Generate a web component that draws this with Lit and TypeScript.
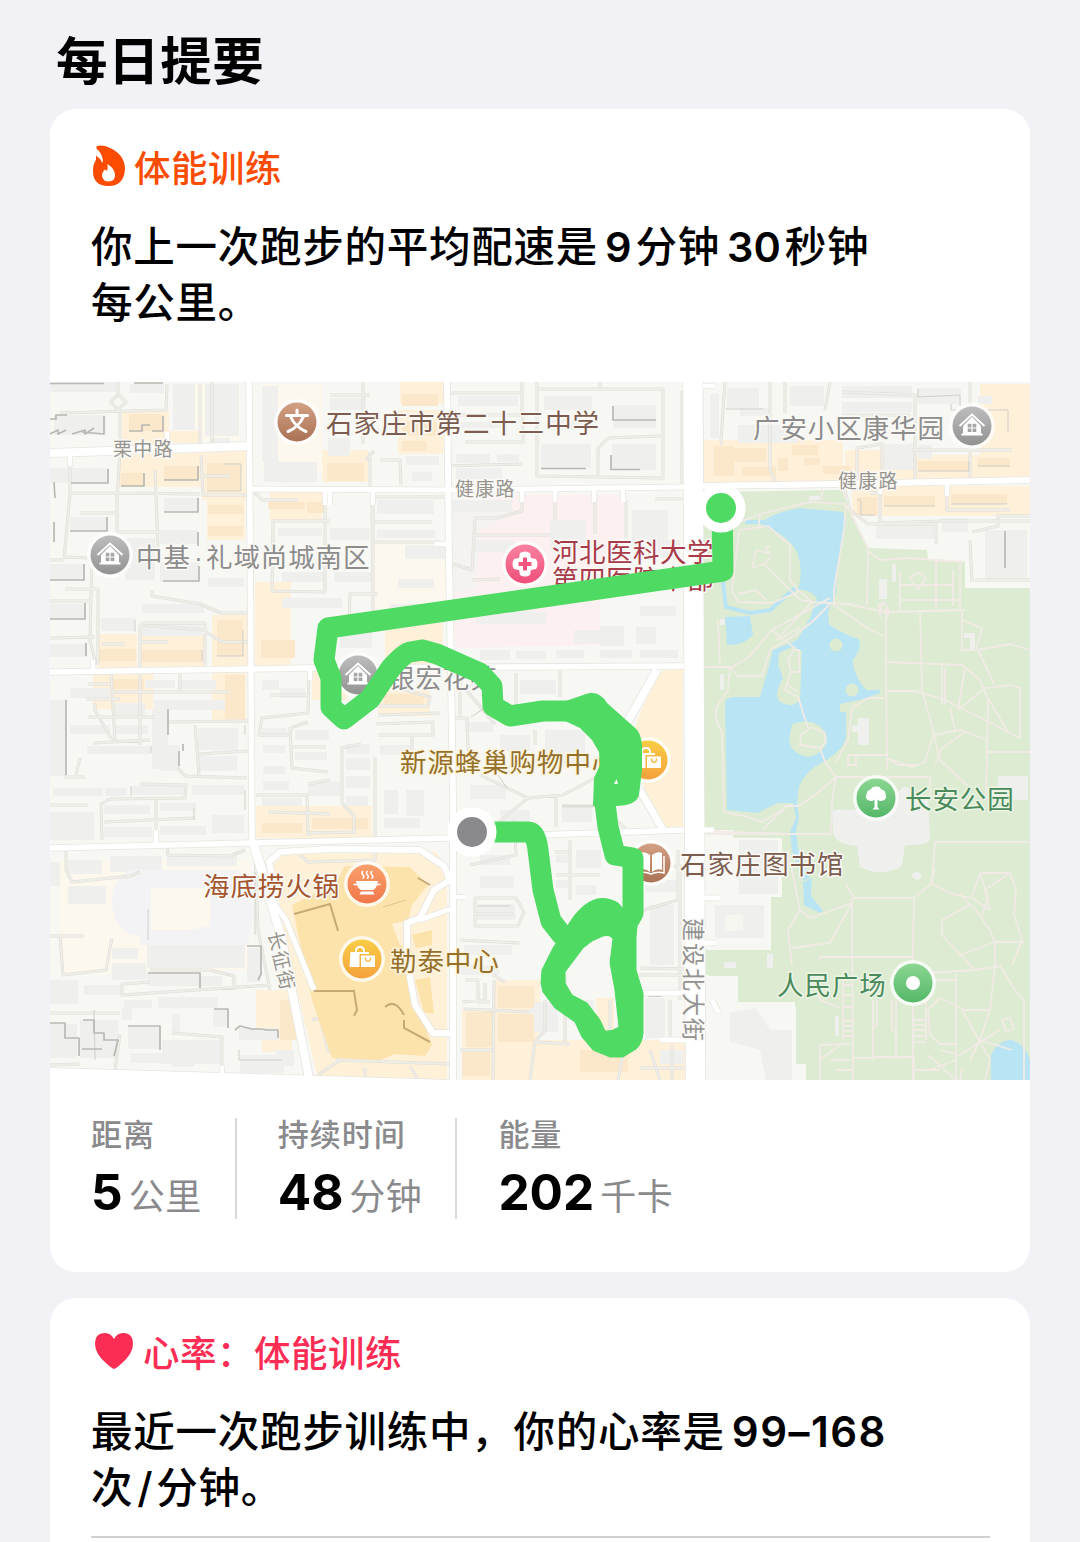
import { LitElement, css, html, svg } from "lit";
import { customElement, property } from "lit/decorators.js";

type Rect = [number, number, number, number];

// main streets: path, width
const STREETS: [string, number][] = [
  ["M50 453L140 450L250 446", 8],
  ["M249 382L251 670L252 845", 5.5],
  ["M250 489L450 490L684 487", 5],
  ["M702 486L840 484L1030 480", 6],
  ["M447 382L449 560L451 670L453 800V1080", 6],
  ["M50 672L250 669L310 668M300 668L684 666", 5.5],
  ["M50 848L250 843L450 838L684 830", 5.5],
  ["M253 843L282 940L309 1078", 8],
  ["M256 845L275 905L286 920L314 990", 5],
  ["M657 670L640 700L620 735", 8],
  ["M640 790L663 830", 7],
  ["M273 880L269 862L280 852L330 849L420 850L444 866L450 880L434 890L420 918L407 923V960L415 1005L433 1033H452", 6],
  ["M420 920L450 909", 5],
  ["M50 1071L222 1076L450 1083", 6],
  ["M222 1074V1066M325 492V505M330 492V505M373 492V505M522 490V502M555 490V502M594 490V502M623 490V502", 4.5],
  ["M167 446V432M70 455V466M310 668V680M93 671V660M156 846V830M435 544H448M450 897H466M880 483V494M947 483V496M703 386H714", 4.5],
  ["M660 1040H690M640 993H686", 5],
  ["M704 898H720M704 943H716M712 1000L718 1012M704 830H714", 5],
];

// small lanes between the buildings
const LANES = [
  "M118 382V394L126 402L118 410L111 402L118 394M60 413L166 410L167 384M120 411V448M120 450L117 500V532H160",
  "M70 465V493L64 558M64 560H50M80 513H115M70 493H117L200 494M155 470L158 548M201 455L203 495H246M201 476H230",
  "M200 384V445M212 382V444M64 557L92 558L90 640L96 665M65 589H98M98 588V665M140 745V625L203 630L222 642H248",
  "M50 601H90M152 590V596L200 604L221 613H247M325 505V592L272 591L273 521H330M273 521V570M372 505L373 590M349 623L350 594H378",
  "M254 492L262 500H298M363 382V444M370 452V488M330 395H370M366 460L374 451M380 460H400L401 485",
  "M372 522H432M375 542H440M372 497H444M373 500V620M450 393H522M449 415H522V382M465 442H523V413M447 466L523 464",
  "M538 389H663V478L537 476V382M598 475V448L608 438L661 436M682 391V490M600 382V391",
  "M522 502V511L497 518H475L472 570L453 564M472 535H550M555 502V520M595 502V534M626 500V538M655 499H684M472 580L500 579",
  "M50 638L95 637M102 644H125M140 642H168M140 623H205V665M95 703V710L112 740H110M88 684H110M86 699H120M88 717H155M93 743L150 740",
  "M111 673L115 740M180 672V690M112 692H230M168 722L248 721M195 725L199 775M178 768L185 776L247 778M199 754L248 751",
  "M140 784L186 785L185 798L110 799L101 804L102 840M156 799V830M104 822L195 818M50 805H88M76 775L80 758M64 777H85",
  "M309 670L308 713L262 718L259 735H288L293 727L308 722M290 727L292 768L328 772M292 747H326M270 695H308",
  "M256 795H307L308 836M268 812L330 814M308 784L330 780M341 748L361 744M342 747V803L354 816V834M308 833L354 832M375 757V840",
  "M378 715L440 713M378 735H433V722L376 724M412 734V750M460 674V717M467 717L468 748L475 765M405 690L430 697L428 706H377",
  "M448 718H465M466 690L495 724M516 673V705M560 670V697M535 730V745M480 775L528 798L563 795L597 777M556 796V827M528 798L480 838M562 806H600M606 810L625 828",
  "M470 865L516 855L514 820M570 840V878M570 900V848M475 898H516L524 912L518 926H475ZM475 914H514M460 940L520 943",
  "M640 868L680 866V1000M637 912L678 900V850M640 968L684 969M630 975H684M570 845V900M555 852H570M556 875H600",
  "M462 1002L485 1000V983M465 980H478V1002H490M493 975L505 982M494 980L493 1080M463 1009L530 1012M545 1000V1030L535 1042L530 1080M535 1042L570 1044",
  "M565 975V1043M610 1000V1030M670 1000V1040M625 1044L618 1080M640 1068H686M672 1045V1080M660 1080L650 1050M460 1050H492",
  "M66 848V870L72 882L130 876L140 872M167 847L168 855L230 856L245 850M60 935L63 975L106 970L112 938M50 936H84",
  "M255 850L258 930L270 990M270 985L122 995V984L150 982M150 970L210 970L234 976V990M50 1013H120M120 1034L115 1070M172 1033L222 1037V1070",
  "M50 1065L80 1064M312 1020L320 1018L328 1050L340 1060L318 1075M340 1060L450 1064M365 1068V1080M410 1066L418 1080M300 855L308 862L375 860V848",
  "M725 382L721 440L722 445M770 382V470L776 482M785 382V413M830 382L825 410M842 392L915 395V480M842 415H910M970 382V480M857 480V448L882 444V470M912 450L1012 450",
  "M843 483L850 510L868 524H936V544M870 493H880V523L942 521H1030M947 496V510H1010M972 532L998 526V516H1030M975 580H1030M970 540L972 582",
  "M706 899H765V938L760 943H706M712 1000V1010L723 1040L762 1053V1080M723 1042L710 1055V1080M750 1050L745 1065",
];

// tinted blocks under the buildings
const SHOPS: Rect[] = [
  [122, 411, 47, 36], [119, 452, 84, 35], [202, 450, 44, 50], [207, 500, 38, 40], [270, 492, 52, 28], [322, 450, 46, 32],
  [97, 634, 40, 34], [140, 635, 64, 32], [212, 615, 36, 52], [255, 582, 36, 85], [93, 674, 60, 35], [212, 673, 34, 48],
  [312, 670, 35, 30], [256, 806, 116, 32], [400, 382, 44, 22], [398, 410, 46, 44], [703, 440, 140, 44], [845, 450, 66, 34],
  [910, 455, 120, 28], [980, 384, 50, 96], [852, 486, 178, 30], [256, 990, 40, 40], [262, 1030, 30, 22], [462, 1009, 76, 71],
  [495, 980, 45, 40], [538, 1040, 148, 40], [385, 620, 58, 44], [378, 690, 52, 26], [596, 998, 18, 40], [170, 431, 30, 12],
];

const SHOP_BUILDINGS: Rect[] = [
  [129, 414, 34, 17], [121, 473, 23, 13], [164, 466, 34, 14], [207, 463, 34, 28], [208, 505, 35, 9], [208, 526, 35, 10],
  [268, 502, 37, 7], [307, 502, 18, 11], [327, 463, 37, 18], [98, 649, 38, 12], [142, 650, 60, 12], [217, 620, 26, 36],
  [261, 640, 34, 18], [110, 679, 34, 10], [225, 675, 20, 44], [262, 823, 40, 10], [312, 818, 56, 11], [402, 394, 36, 12],
  [402, 422, 35, 14], [402, 441, 25, 10], [714, 446, 20, 30], [742, 467, 34, 9], [778, 458, 10, 13], [792, 445, 26, 10],
  [804, 458, 16, 7], [823, 466, 28, 8], [728, 448, 38, 14], [918, 461, 51, 10], [978, 458, 32, 9], [884, 496, 51, 10],
  [951, 494, 56, 10], [857, 497, 20, 18], [498, 986, 36, 22], [466, 1012, 26, 35], [498, 1014, 36, 28], [462, 1052, 28, 24],
  [580, 1050, 48, 22], [280, 1000, 18, 40], [384, 694, 40, 10],
];

const BUILDINGS: Rect[] = [
  [50, 382, 66, 10], [54, 415, 52, 20], [50, 468, 59, 15], [70, 517, 37, 14], [50, 564, 34, 16], [50, 604, 34, 15], [50, 644, 37, 13],
  [130, 384, 34, 9], [173, 384, 22, 46], [205, 384, 34, 52], [210, 438, 20, 6], [164, 498, 34, 14], [160, 530, 38, 14], [160, 562, 39, 20],
  [125, 538, 30, 42], [208, 578, 36, 9], [142, 604, 62, 9], [101, 618, 34, 13], [142, 624, 60, 12], [262, 386, 16, 76], [264, 462, 53, 20],
  [330, 398, 36, 12], [328, 438, 22, 18], [278, 528, 44, 8], [330, 528, 40, 12], [282, 572, 44, 10], [334, 572, 38, 10], [282, 598, 60, 10],
  [340, 628, 32, 20], [70, 688, 40, 10], [145, 680, 30, 8], [178, 680, 38, 9], [154, 700, 74, 10], [50, 700, 15, 76], [70, 725, 40, 9],
  [115, 725, 33, 9], [152, 709, 16, 60], [115, 703, 30, 12], [87, 746, 64, 8], [198, 728, 40, 22], [199, 756, 38, 15], [160, 745, 20, 26],
  [53, 788, 50, 8], [105, 788, 22, 8], [131, 786, 54, 9], [192, 785, 52, 10], [104, 805, 46, 9], [160, 803, 36, 8], [104, 827, 48, 10],
  [160, 826, 46, 9], [212, 815, 32, 18], [50, 812, 44, 28], [262, 680, 17, 10], [280, 688, 25, 10], [262, 728, 25, 9], [295, 730, 34, 10],
  [263, 745, 22, 8], [295, 752, 32, 8], [263, 766, 22, 8], [263, 781, 26, 9], [308, 782, 32, 14], [262, 798, 40, 8], [346, 744, 24, 10],
  [346, 758, 24, 12], [346, 776, 24, 12], [346, 796, 22, 10], [380, 745, 30, 10], [384, 790, 14, 24], [406, 790, 18, 26], [384, 818, 36, 10],
  [458, 396, 60, 10], [456, 422, 52, 6], [456, 454, 34, 9], [497, 454, 22, 8], [456, 468, 46, 11], [406, 456, 33, 9], [412, 472, 20, 9],
  [544, 396, 48, 14], [613, 405, 43, 23], [541, 444, 50, 24], [612, 444, 44, 26], [546, 420, 46, 10], [377, 500, 57, 14], [377, 530, 58, 8],
  [405, 545, 40, 14], [398, 579, 36, 9], [390, 604, 40, 10], [452, 500, 60, 12], [475, 540, 40, 12], [550, 520, 36, 30], [632, 510, 36, 30],
  [650, 540, 30, 18], [600, 626, 24, 20], [640, 606, 36, 10], [636, 627, 20, 17], [574, 630, 30, 14], [476, 612, 70, 12], [480, 650, 30, 10],
  [516, 651, 30, 8], [556, 650, 28, 8], [600, 650, 32, 8], [640, 650, 38, 8], [470, 678, 24, 10], [520, 680, 36, 14], [465, 722, 28, 10],
  [545, 730, 40, 36], [500, 735, 30, 16], [470, 785, 36, 14], [500, 810, 30, 16], [562, 806, 30, 16], [480, 855, 30, 10], [480, 876, 34, 12],
  [477, 904, 38, 16], [464, 945, 48, 10], [455, 965, 44, 10], [556, 855, 12, 8], [556, 880, 12, 8], [576, 850, 25, 18], [576, 885, 20, 10],
  [650, 905, 24, 60], [645, 998, 20, 40], [645, 880, 32, 12], [530, 1002, 28, 30], [580, 1000, 14, 30], [660, 1050, 24, 14], [536, 880, 10, 30],
  [68, 886, 38, 18], [68, 860, 34, 14], [110, 856, 52, 16], [167, 856, 70, 10], [112, 948, 26, 11], [112, 963, 34, 17], [84, 985, 37, 10],
  [50, 980, 28, 24], [124, 1000, 28, 8], [122, 1008, 10, 12], [158, 997, 60, 11], [50, 1024, 27, 34], [80, 1020, 38, 38], [128, 1027, 32, 22],
  [172, 1014, 8, 20], [162, 1040, 60, 24], [131, 1053, 38, 10], [172, 1053, 22, 14], [213, 1009, 14, 18], [239, 1028, 39, 12], [240, 1055, 44, 18],
  [147, 943, 98, 25], [147, 972, 52, 14], [200, 976, 22, 10], [247, 948, 14, 34], [50, 862, 10, 24], [276, 1050, 18, 16],
  [710, 394, 9, 44], [727, 388, 32, 20], [790, 386, 34, 20], [842, 386, 70, 12], [917, 388, 44, 16], [842, 402, 70, 10], [884, 444, 30, 26],
  [876, 522, 58, 17], [942, 518, 26, 14], [985, 530, 42, 50], [918, 445, 14, 14], [978, 396, 14, 8], [738, 425, 60, 18], [740, 408, 30, 8],
];

const SHADOWS = [
  "M50 419H56V415H67M50 434L58 430V434L66 430M72 434L85 430V434L94 428M82 432L104 434V416M50 383.5H104M134 383H163",
  "M71 483H108V469M121 486H144V473M164 480H198V466M164 512H198V498M198 532V546M54 482L55 498M54 522V542",
  "M129 431H142V425H150M163 416V431H152M70 531H107V517M84 564V580H50M85 603V619H50M86 643V656",
  "M163 581H199V566M613 406V420H656M541 468.5H586M611 455V469.5H640",
  "M183 744V751M179 751V766M168 709V735M66 700V775",
  "M148 973H200V988M247 946H261V974L258 980",
  "M50 1023H65V1038H79V1056M83 1020H94V1033H104V1040H118L114 1056M82 1049H102M128 1026H160V1050",
  "M235 1030L240 1026L252 1029H262L266 1030H278V1038M214 1009H228V1028",
  "M730 1014H750L762 1022L770 1030L778 1032H792M1005 531V568M648 996H662",
];

const THIN_SHADOWS = [
  "M148 909V940M255 872V935M224 464H241V491H207M239 1050V1060H282M95 1060L94 1010",
  "M918 389V397L960 395V406M478 906H510M471 717L488 706M498 775L507 788M562 806H600",
  "M726 409H763M736 1020V1030M857 500H861V515H875M918 471H969V461M978 466H1010M884 506H935M951 504H1007M951 404V410H1008V432",
  "M217 656H243V630M202 650V661M262 862V870M135 620V632M245 725V735M151 746V753M245 790V810M194 808V820M131 786V796",
];

const PARK_PATHS = [
  "M716 522L745 520L760 514L810 502L846 504L868 548L867 605M822 486V500M760 514L758 530M739 530L768 526L790 545V580L798 590L812 602L848 604L884 612L965 610",
  "M739 532L732 590L738 602L772 603L798 592M738 594L756 590L766 600M756 550L770 554L765 548L771 546M756 550L752 568L764 564L770 558M764 564L800 600L812 602L776 640L800 628",
  "M846 504L844 530L834 590L834 605L870 630L884 636M867 550L880 560L908 558L965 562M900 572V610M936 560V610M900 600H960M960 560V612M900 585H955M953 570V606M880 618V606L886 604",
  "M910 578L918 572L926 578L918 590ZM884 612L878 605L884 602L888 608V618M718 620L720 667L731 668L750 656L772 630L830 598M704 667H730L728 690L716 708V720L722 732L724 812L745 816L762 822L790 805",
  "M772 630L795 648L788 660L791 672L785 690L798 697L808 728M731 668L738 676H762L770 650L795 635L812 622L830 604M791 672H799V650H795M788 685L798 692",
  "M801 735L812 727L824 733L826 742L820 748L800 745ZM820 748L825 762L836 777L815 795L798 806H785M836 777H930V800M762 830L787 806M836 777L832 800V820L830 835M836 762L848 740L852 708L868 698H884",
  "M886 608L886 660L887 770M920 612L922 690L933 730L940 760L968 786M886 662L962 665L980 680L988 700L986 800M886 691H915L945 700L985 720L1020 738V688L1010 685L985 688L958 710",
  "M942 666V704M945 668V704M965 668L958 710M887 758L912 767L925 762L933 735L960 730L987 740M950 708L955 730M935 764L942 748L965 732M962 610V650L976 650L982 628L962 620",
  "M978 650L994 684M978 650L1010 644L1030 650M988 698L1008 732M986 752H1030M887 758L898 765H916M704 831L790 834L784 834M706 834H830M848 755H888M848 755V765H856V755",
  "M788 850L800 910L788 930L792 965M792 948L830 943L852 903L810 918L800 910M852 898L853 1080M846 884L854 898H914L930 885L935 870M914 898L912 990M820 960V957H912M935 842H1030M935 842L932 884",
  "M980 873H1010L1016 890L1014 915L1022 940L1012 965M932 884L955 895L972 898L990 910M972 896L980 873L988 898L982 915M990 910L985 890L1008 874M960 894L970 905L942 920L942 935L956 950L975 970L1000 966L1015 990L1024 1000V1080",
  "M972 905L990 930L995 942L1024 942M995 942V966L990 1010L980 1040L970 1060M995 942L960 955M930 973L975 970M956 974V1080M929 980H956M940 998L965 1010L990 1010M940 998L928 1010L930 1035L940 1044H955",
  "M818 975L820 1000L840 1008M843 980V1040M843 985H853M843 995H853M843 1007H853M843 1021H853M843 1026H853M843 1031H853M843 1036H853M873 1000V1060M877 1000V1025L872 1030M892 1000V1030L898 1034M896 1000V1060",
  "M913 1000V1080M926 1000V1040M914 1020H926M914 1025H926M914 1030H926M914 1036H926M914 1042H926M853 1058H873M873 1057H914V1080M896 1057H914M820 1045L850 1044M820 1045V1080M830 1060H850M820 1060L840 1045M835 1070H853",
  "M962 1010L980 1042L1000 1030M980 1042L960 1055L940 1050M980 1042L990 1060L985 1080M1002 1020L1010 1018L1014 1028L1006 1032ZM980 1040L1012 1050M928 1055L956 1080M915 1070H940M956 1060L930 1070M960 1080L962 1068",
];

const LAKE =
  "M763 522Q772 513 800 508L843 512L846 522L837 573L836 593L828 612L829 624Q840 633 858 639Q864 645 853 660Q852 668 860 682L866 690L880 690V693L863 699L840 704V712H846V738Q843 750 825 761Q806 770 799 786L797 803H778L757 813L727 810L725 702Q726 697 736 697H760L767 673L773 650L797 640L810 618L817 598Q808 588 798 590Q804 572 797 552Q788 535 763 526Z";

const ROUTE =
  "M722 508L723 571L328 628L324 660L331 678L331 707L344 719L370 699L391 668Q404 653 410 652L423 650L437 654L480 673L492 686L493 706L510 716L543 711H572L592 704M605 803L608 827L615 855L633 858V913L625 927M472 832H528Q536 832 538 850L543 890L551 921L562 935";

// closing lap of the run, with its gap left open
const LAP =
  "M541 983L542 970L553 948L570 922Q582 903 597 899Q608 897 618 903L626 912L637 927L636 937V970L643 993V1033Q642 1044 636 1049L623 1057H610L593 1050L582 1037L575 1022L555 1008L543 992ZM565 972V983L572 995L587 1003L600 1020L605 1031Q612 1032 619 1027L615 990L610 963L613 939Q610 934 603 936L592 941L583 948Z";

@customElement("route-map")
export class RouteMap extends LitElement {
  static styles = css`
    :host {
      display: block;
    }

    svg {
      display: block;
      width: 100%;
    }

    text {
      font-family: "Noto Sans CJK SC", sans-serif;
      font-size: 26.5px;
      letter-spacing: 0.9px;
      paint-order: stroke;
      stroke: #faf9f5;
      stroke-width: 3px;
      stroke-linejoin: round;
    }

    .street {
      font-size: 19px;
      letter-spacing: 1.2px;
      fill: #96948f;
    }

    .avenue {
      font-size: 23px;
      letter-spacing: 2px;
      fill: #929292;
    }

    .school {
      fill: #7d5c50;
    }

    .place {
      fill: #8c8c8c;
    }

    .dot {
      font-family: "Liberation Sans", sans-serif;
      letter-spacing: 0;
    }

    .clinic {
      fill: #a83a4a;
      letter-spacing: 0.5px;
    }

    .shop {
      fill: #94702a;
      stroke: #fcf4dd;
    }

    .food {
      fill: #a4552f;
    }

    .park {
      fill: #4a8a5b;
      stroke: #edf5e6;
    }
  `;

  private rects(list: Rect[], fill: string) {
    return svg`<path fill=${fill} d=${list.map(([x, y, w, h]) => `M${x} ${y}h${w}v${h}h${-w}z`).join("")}></path>`;
  }

  private pin(x: number, y: number, tone: string, glyph: unknown) {
    return svg`
      <g transform="translate(${x} ${y})">
        <circle r="23" fill="#fff" opacity="0.75"></circle>
        <circle r="19.5" fill="url(#${tone})"></circle>
        ${glyph}
      </g>
    `;
  }

  private gradient(id: string, from: string, to: string) {
    return svg`
      <linearGradient id=${id} x1="0" y1="0" x2="0" y2="1">
        <stop offset="0" stop-color=${from}></stop>
        <stop offset="1" stop-color=${to}></stop>
      </linearGradient>
    `;
  }

  private houseGlyph() {
    return svg`
      <path d="M-12.5 0L0 -11.5L12.5 0" fill="none" stroke="#fff" stroke-width="2"></path>
      <path fill="#fff" fill-rule="evenodd" d="M0 -9L-9 0V7.5H-10.5V9.5H10.5V7.5H9V0ZM-4.3 -2.2H-.6V1.4H-4.3ZM.6 -2.2H4.3V1.4H.6ZM-4.3 2.5H-.6V6H-4.3ZM.6 2.5H4.3V6H.6Z"></path>
    `;
  }

  private bagGlyph() {
    return svg`
      <path d="M-6 -6V-8Q-6 -12 -2 -12Q2 -12 2 -8V-6" fill="none" stroke="#fff" stroke-width="1.8"></path>
      <path fill="#fff" d="M-11.5 -7H7V-5H-2.5V8H-12.5Z"></path>
      <path fill="#fff" fill-rule="evenodd" d="M-1 -3.5H13V8H-1ZM2.6 -1.5Q3 3 6 3Q9 3 9.4 -1.5H8Q7.8 1.6 6 1.6Q4.2 1.6 4 -1.5Z"></path>
    `;
  }

  private schoolGlyph() {
    return svg`
      <path d="M0 -12V-8M-10.5 -6.5H10.5M-6.5 -5.5Q-2 5 9 9.5M6.5 -5.5Q2 5 -9 9.5" fill="none" stroke="#fff" stroke-width="3" stroke-linecap="round"></path>
    `;
  }

  private clinicGlyph() {
    return svg`
      <path fill="#fff" d="M-5 -11Q0 -14 5 -11L6 -6L11 -5Q14 0 11 5L6 6L5 11Q0 14 -5 11L-6 6L-11 5Q-14 0 -11 -5L-6 -6Z"></path>
      <path d="M0 -6.5V6.5M-6.5 0H6.5" stroke="#f2557f" stroke-width="4"></path>
    `;
  }

  private potGlyph() {
    return svg`
      <path fill="#fff" d="M-11 -3H11Q10 4 6 6H-6Q-10 4 -11 -3ZM-6 7.5H6L7.5 10.5H-7.5Z"></path>
      <path d="M-13.5 0.5H13.5M-4 -13Q-6 -11 -4 -9T-4.5 -5.5M0.5 -13Q-1.5 -11 0.5 -9T0 -5.5M5 -13Q3 -11 5 -9T4.5 -5.5" fill="none" stroke="#fff" stroke-width="1.5"></path>
    `;
  }

  private bookGlyph() {
    return svg`
      <path fill="#fff" d="M-1 -8Q-6 -12 -11 -10V7Q-6 5 -1 9ZM1 -8Q6 -12 11 -10V7Q6 5 1 9Z"></path>
      <path d="M-13 -7V10Q-6 8 0 11Q6 8 13 10V-7" fill="none" stroke="#fff" stroke-width="1.5"></path>
    `;
  }

  private treeGlyph() {
    return svg`
      <path fill="#fff" d="M0 -11.5Q4 -12 5.5 -8.5Q10 -7.5 9.5 -3.5Q11.5 1 7 2.5Q3.5 4 1.5 1.5V9L3.5 11.5H-3.5L-1.5 9V1.5Q-4 4 -7 2.5Q-11.5 1 -9.5 -3.5Q-9.5 -7.5 -5.5 -8.5Q-3.5 -12 0 -11.5Z"></path>
    `;
  }

  protected override render() {
    return html`
      <svg viewBox="50 382 980 698">
        <defs>
          ${this.gradient("grey", "#bdbdbd", "#929292")}
          ${this.gradient("brown", "#d3a084", "#aa7254")}
          ${this.gradient("pink", "#fa82a0", "#ee4f79")}
          ${this.gradient("gold", "#f8cd45", "#f5a13c")}
          ${this.gradient("orange", "#faa06c", "#f1774a")}
          ${this.gradient("green", "#8bd692", "#55b768")}
        </defs>
        <path fill="#f7f8f3" d="M50 382H1030V1080H50Z"></path>
        <path fill="#fdf8ee" d="M174 384H240V440H174ZM262 384H322V470H262ZM372 540H446V620H372ZM60 860H250V970H60ZM60 936H112V974H60Z"></path>
        <path fill="#fcf0f0" d="M452 506L510 495H624V535L600 600L600 645L456 648L452 600Z"></path>
        <path fill="#f4f3f1" d="M452 500H512V515L480 530L476 590L452 592Z"></path>
        <path fill="#fff0d8" d="M272 866L284 854L436 852L447 868V1080H318L290 960Z"></path>
        <path fill="#fff0d8" d="M656 672L683 668V827H666L645 790L630 740Z"></path>
        ${this.rects(SHOPS, "#fff0da")}
        ${this.rects(BUILDINGS, "#efefee")}
        <ellipse cx="137" cy="902" rx="25" ry="33" fill="#f3f3f5"></ellipse>
        <path fill="#f3f3f5" d="M137 870H240L254 910L248 945H140Z"></path>
        <path fill="#fdf8ee" d="M151 888H210V926L190 930H151Z"></path>
        ${this.rects(SHOP_BUILDINGS, "#fbe8ca")}
        <g fill="none" stroke-linejoin="round">
          <path d=${LANES.join("")} stroke="#deddd7" stroke-width="3"></path>
          <path d=${LANES.join("")} stroke="#eeede8" stroke-width="1.8"></path>
          <path d=${THIN_SHADOWS.join("")} stroke="#d0cfc9" stroke-width="1"></path>
          <path d=${SHADOWS.join("")} stroke="#b9b8b3" stroke-width="1.7"></path>
        </g>
        <path fill="#fce3ab" d="M292 905L335 884L345 866L410 867L428 885L412 905L408 920L392 924L400 945L412 950L410 975L420 1015L432 1045L425 1056L395 1054L380 1060L332 1058L312 1000Z"></path>
        <path fill="#fce3ab" d="M412 935L432 930V945L416 948ZM415 980L430 977L434 1014L424 1012Z"></path>
        <path d="M294 914L330 904L338 931M314 991H354L357 1010L354 1016M385 1007Q395 998 404 1015M404 1020V1028L430 1042M418 878L430 885" fill="none" stroke="#c5aa77" stroke-width="2"></path>
        <path d="M383 907L406 900" stroke="#dcc590" stroke-width="1"></path>

        <path fill="#dcebd1" d="M704 492L842 490L848 506L868 548L927 550L928 560L965 562V588H1030V1080H806V1064H796V1007H733V830L704 830Z"></path>
        <path fill="#dcebd1" d="M706 950H790V1003H735V980L706 975Z"></path>
        <path fill="#f7f8f3" d="M706 838H782V897H771V950H706ZM706 976H738V1002H795V1080H706Z"></path>
        <path fill="#efefee" d="M739 840H778V894H739ZM715 905H764V938H715ZM730 1012L756 1008L770 1030H792V1080H766L760 1050L730 1042ZM724 962H736V968H724ZM767 954H773V968H767Z"></path>
        <path fill="#f5f6ef" d="M725 915H743V931H725Z"></path>
        <path fill="#efefee" d="M833 812Q834 808 850 810L880 806L905 786L928 800L930 840Q926 846 905 845L902 866Q882 878 860 867L857 846Q836 844 833 834ZM879 579H887V599H879ZM892 564H896V582H892ZM858 718H869V745H858V732H852V725H858ZM998 776H1028V800H998ZM720 674H724V690H720ZM720 619H725V625H720ZM835 1016H839V1036H835ZM964 633H975V650H970V638H964ZM911 875Q918 868 922 877Q917 883 911 875ZM809 496H820V500H809Z"></path>
        <path fill="#b9e4f4" d=${LAKE}></path>
        <path fill="#b9e4f4" d="M725 617L750 616L753 635Q743 646 727 645ZM803 880L812 878L811 896L823 911L820 913L804 905ZM991 1055Q998 1040 1012 1040Q1028 1046 1030 1062V1080H991ZM793 803L796 818L790 832L792 850L804 882L810 879L798 848L796 832L799 818L797 803Z"></path>
        <path d="M745 522H766M723 582L726 607L750 613L770 610L795 588" fill="none" stroke="#b9e4f4" stroke-width="4"></path>
        <path fill="#dcebd1" d="M779 653L792 647L802 651L800 700Q792 709 780 702Q773 695 783 678L778 665ZM792 724Q815 716 826 733Q830 752 808 757Q786 752 790 735Z"></path>
        <circle cx="836" cy="645" r="6.5" fill="#dcebd1"></circle>
        <circle cx="852" cy="690" r="6.5" fill="#dcebd1"></circle>
        <path d=${PARK_PATHS.join("")} fill="none" stroke="#f1eae5" stroke-width="1.8"></path>

        <g fill="none" stroke-linejoin="round">
          ${STREETS.map(([d, w]) => svg`<path d=${d} stroke="#e6e6e0" stroke-width=${w + 1.6}></path>`)}
          <path d="M693 380L695.5 1082" stroke="#e3e3de" stroke-width="21"></path>
          ${STREETS.map(([d, w]) => svg`<path d=${d} stroke="#fff" stroke-width=${w}></path>`)}
          <path d="M693 380L695.5 1082" stroke="#fff" stroke-width="19.5"></path>
        </g>
        <path fill="#fff" d="M50 1069L222 1075L310 1076L450 1081H50Z"></path>

        <text class="street" x="113" y="456">栗中路</text>
        <text class="street" x="455" y="496">健康路</text>
        <text class="street" x="838" y="488">健康路</text>
        <text class="street" transform="translate(268 933) rotate(77)">长征街</text>
        <text class="avenue" transform="translate(685 918) rotate(90)">建设北大街</text>

        <text class="school" x="326" y="433">石家庄市第二十三中学</text>
        ${this.pin(297, 422, "brown", this.schoolGlyph())}
        <text class="place" x="753" y="438">广安小区康华园</text>
        ${this.pin(972, 426, "grey", this.houseGlyph())}
        <text class="place" x="136" y="567">中基</text>
        <text class="place dot" x="194" y="567">·</text>
        <text class="place" x="206" y="567">礼域尚城南区</text>
        ${this.pin(110, 555, "grey", this.houseGlyph())}
        <text class="clinic" x="552" y="589">第四医院本部</text>
        <text class="clinic" x="552" y="562">河北医科大学</text>
        ${this.pin(525, 564, "pink", this.clinicGlyph())}
        <text class="place" x="388" y="688">银宏花苑</text>
        ${this.pin(358, 675, "grey", this.houseGlyph())}
        <text class="shop" x="400" y="772">新源蜂巢购物中心</text>
        ${this.pin(648, 760, "gold", this.bagGlyph())}
        <text class="park" x="905" y="809">长安公园</text>
        ${this.pin(876, 798, "green", this.treeGlyph())}
        <text class="school" x="680" y="874">石家庄图书馆</text>
        ${this.pin(651, 863, "brown", this.bookGlyph())}
        <text class="food" x="203" y="896">海底捞火锅</text>
        ${this.pin(367, 884, "orange", this.potGlyph())}
        <text class="shop" x="390" y="971">勒泰中心</text>
        ${this.pin(362, 959, "gold", this.bagGlyph())}
        <text class="park" x="777" y="995">人民广场</text>
        ${this.pin(913, 983, "green", svg`<circle r="7" fill="#fff"></circle>`)}

        <path d=${ROUTE} fill="none" stroke="#4fda64" stroke-width="21" stroke-linejoin="round" stroke-linecap="round"></path>
        <path fill="#4fda64" fill-rule="evenodd" stroke="#4fda64" d=${LAP}></path>
        <path fill="#4fda64" d="M563 702L586 694Q599 690 607 703L634 727Q641 732 642 745V770L639 795Q636 806 615 806L593 806L594 778L600 765L599 752L592 740L580 728L563 720Z"></path>
        <path fill="#f7f8f3" d="M616.5 779L618 784L614 784Z"></path>
        <circle cx="721" cy="508" r="24.5" fill="#fff"></circle>
        <circle cx="721" cy="508" r="15" fill="#4fda64"></circle>
        <circle cx="472" cy="832" r="24.5" fill="#fff"></circle>
        <circle cx="472" cy="832" r="15" fill="#8a898e"></circle>
      </svg>
    `;
  }
}

@customElement("stat-item")
export class StatItem extends LitElement {
  static styles = css`
    :host {
      display: flex;
      flex-direction: column;
      height: 101px;
      font-family: "Noto Sans CJK SC", sans-serif;
      white-space: nowrap;
    }

    .label {
      font-size: 31px;
      font-weight: 500;
      line-height: 30px;
      letter-spacing: 1px;
      color: #8a8a8d;
    }

    .row {
      display: flex;
      align-items: baseline;
      gap: 6px;
      margin-top: 14px;
      line-height: 60px;
    }

    .value {
      font-family: Inter, sans-serif;
      font-size: 49.5px;
      font-weight: 700;
      color: #000;
    }

    .unit {
      font-size: 36px;
      letter-spacing: 0.5px;
      color: #8a8a8d;
    }
  `;

  @property() label = "";
  @property() value = "";
  @property() unit = "";

  protected override render() {
    return html`
      <span class="label">${this.label}</span>
      <div class="row">
        <span class="value">${this.value}</span>
        <span class="unit">${this.unit}</span>
      </div>
    `;
  }
}

@customElement("app-root")
export class AppRoot extends LitElement {
  static styles = css`
    :host {
      display: flex;
      flex-direction: column;
      box-sizing: border-box;
      height: 1542px;
      padding: 0 50px;
      overflow: hidden;
      background: #f1f1f6;
      color: #000;
      font-family: "Noto Sans CJK SC", sans-serif;
    }

    h1 {
      flex: none;
      margin: 0;
      height: 109px;
      padding: 21px 0 0 6px;
      box-sizing: border-box;
      font-size: 51.5px;
      font-weight: 700;
      line-height: 74px;
      letter-spacing: 0.6px;
    }

    .card {
      flex: none;
      background: #fff;
      border-radius: 26px;
      overflow: hidden;
    }

    .workout {
      height: 1163px;
    }

    .heart {
      height: 300px;
      margin-top: 26px;
    }

    .head {
      display: flex;
      align-items: center;
      padding: 35px 41px 0;
      height: 44px;
      font-size: 36.5px;
      font-weight: 500;
      letter-spacing: 0.5px;
    }

    .flame {
      color: #fc4c02;
      gap: 8px;
    }

    .pulse {
      padding-top: 31px;
      color: #fb2d55;
      gap: 10px;
    }

    .head svg {
      flex: none;
      margin-left: 2px;
    }

    .pulse svg {
      margin-left: 4px;
    }

    .summary {
      margin: 0;
      padding: 28px 41px 0;
      font-size: 41.5px;
      font-weight: 500;
      line-height: 56px;
      letter-spacing: 0.75px;
      white-space: nowrap;
    }

    .num {
      margin: 0 4px 0 7px;
      font-family: Inter, sans-serif;
      font-size: 41.5px;
      font-weight: 600;
      line-height: 0;
      letter-spacing: 0;
    }

    .range {
      font-size: 42px;
      letter-spacing: 1.5px;
    }

    .slash {
      margin: 0 3px 0 4px;
      font-family: Inter, sans-serif;
      line-height: 0;
    }

    route-map {
      height: 698px;
      margin-top: 54px;
    }

    .stats {
      display: flex;
      padding: 38px 41px 0;
    }

    stat-item + stat-item {
      margin-left: 33px;
      padding-left: 41px;
      border-left: 2px solid #d9d9dc;
    }

    .line {
      margin: 23px 40px 0 41px;
      border-top: 2px solid #d0d0d3;
    }
  `;

  protected override render() {
    return html`
      <h1>每日提要</h1>
      <section class="card workout">
        <div class="head flame">
          <svg width="33" height="42" viewBox="0 0 33 42">
            <path
              fill="currentColor"
              fill-rule="evenodd"
              d="M4 1Q10 -.5 17 3Q32 10 32 24Q31 41 15.5 41Q0 41 0 26Q0 19 3 15V10.5Q7 13 9.5 18Q11 13 6 6Q2 3 4 1ZM14.500 19Q15 23 14 26L12 24.5Q9 27 9 31Q10 36.5 15.5 36.5Q22 36.5 22 30Q22 24 14.500 19Z"
            ></path>
          </svg>
          <span>体能训练</span>
        </div>
        <p class="summary">
          你上一次跑步的平均配速是<span class="num">9</span>分钟<span class="num">30</span>秒钟<br />每公里。
        </p>
        <route-map></route-map>
        <div class="stats">
          <stat-item label="距离" value="5" unit="公里"></stat-item>
          <stat-item label="持续时间" value="48" unit="分钟"></stat-item>
          <stat-item label="能量" value="202" unit="千卡"></stat-item>
        </div>
      </section>
      <section class="card heart">
        <div class="head pulse">
          <svg width="38" height="36" viewBox="0 0 38 36">
            <path
              fill="currentColor"
              d="M19 36Q17 35.5 12 31Q0 21 0 11Q0 0 10 0Q16 0 19 6Q22 0 28 0Q38 0 38 11Q38 21 26 31Q21 35.5 19 36Z"
            ></path>
          </svg>
          <span>心率：体能训练</span>
        </div>
        <p class="summary">
          最近一次跑步训练中，你的心率是<span class="num range">99–168</span><br />次<span class="slash">/</span>分钟。
        </p>
        <div class="line"></div>
      </section>
    `;
  }
}
